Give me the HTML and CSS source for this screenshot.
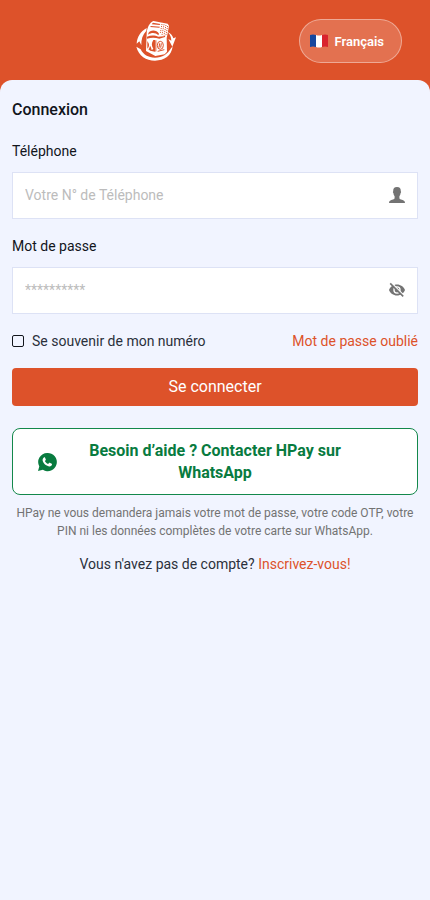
FILE: index.html
```html
<!DOCTYPE html>
<html lang="fr">
<head>
  <meta charset="UTF-8" />
  <meta name="viewport" content="width=device-width, initial-scale=1.0"/>
  <title>HPay - Connexion</title>
  <link rel="stylesheet" href="styles.css">
</head>
<body>
  <header class="header">
    <div class="logo">
      <svg viewBox="48 30 120 120" role="img" aria-label="HPay">
        <!-- arrows around the box -->
        <g fill="#fff">
          <path d="M80 51C61 62 51 78 50 98l8-7 6 12c-1-18 4-32 15-44z"/>
          <path d="M49 107l13 8c8 16 22 25 43 25 22 0 38-10 48-28l5-6c-3 28-25 43-53 43-27 0-49-15-56-42z"/>
          <path d="M143 63c8 8 11 17 11 26l-9-5 12 23 11-28-8 3c-2-8-7-15-17-19z"/>
        </g>
        <!-- box -->
        <path fill="#fff" d="M80 69c0-17 9-35 20-39l43 8 4 6-4 23-3 14 1 41-7 8-28 5-28-15z"/>
        <g fill="#dd522a">
          <path d="M99 35l22 4-2 3-24-2zM93 45l27 2-2 3-28-2z"/>
          <path d="M85 67c5-11 25-11 32 1l-2 5c-8-8-20-9-30-2z"/>
          <path d="M81 77c11-5 25-4 34 0l16-1 5-3-1 5-17 5c-13-4-24-4-37 0z"/>
          <path d="M82 90c7 9 7 16 0 23zM100 87c-6 9-6 17 0 27l-5 3c-1-6-2-9-5-13-1 5-2 8-5 11l6 4 14 3V87z"/>
          <path d="M106 88h3v33l-3 1z"/>
        </g>
        <g fill="none" stroke="#dd522a" stroke-width="3">
          <path d="M126 39l-5 27M132 40l-6 32M138 42l-6 31M143 45l-5 27" stroke-dasharray="3 3"/>
          <ellipse cx="121" cy="103" rx="9" ry="12"/>
          <path d="M119 97l-2 13M124 97l-2 13"/>
          <path d="M113 121l20-5"/>
        </g>
      </svg>
    </div>
    <button type="button" class="lang-btn">
      <svg class="flag" viewBox="0 0 18 14" aria-hidden="true">
        <path fill="#17479e" d="M0 1q3-1 6 0v12q-3-1-6 0z"/>
        <path fill="#fff" d="M6 1q3 1 6 0v12q-3 1-6 0z"/>
        <path fill="#d9232e" d="M12 1q3-1 6 0v12q-3-1-6 0z"/>
      </svg>
      <span>Français</span>
    </button>
  </header>

  <main class="panel">
    <h1>Connexion</h1>
    <form>
      <label class="field-label" for="phone">Téléphone</label>
      <div class="field">
        <input type="tel" id="phone" placeholder="Votre N° de Téléphone">
        <svg class="field-icon" viewBox="0 0 16 16" aria-hidden="true">
          <path fill="#737373" d="M8 0C5.300 0 4 1.500 4.200 4.200c-.5.500-.3 1.500.2 1.900.2 1.500.6 2.500 1.200 3.200v1.700c0 .9-.7 1.300-1.600 1.600C1.500 13.400 0 13.900 0 16h16c0-2.100-1.500-2.600-4-3.400-.9-.3-1.600-.7-1.600-1.600V9.300c.6-.7 1-1.700 1.200-3.200.5-.4.700-1.400.2-1.900C12 1.500 10.700 0 8 0z"/>
        </svg>
      </div>

      <label class="field-label" for="password">Mot de passe</label>
      <div class="field">
        <input type="password" id="password" placeholder="**********">
        <button type="button" class="field-icon" aria-label="Afficher le mot de passe">
          <svg viewBox="0 0 16 16" aria-hidden="true">
            <path fill="#737373" fill-rule="evenodd" d="M8 2.500C4.300 2.500 1.300 4.800 0 8c1.300 3.200 4.300 5.500 8 5.500s6.700-2.300 8-5.500c-1.300-3.200-4.300-5.500-8-5.500zM8 4.300a3.700 3.700 0 1 1 0 7.400 3.700 3.700 0 0 1 0-7.400z"/>
            <circle cx="8" cy="8" r="2.400" fill="#737373"/>
            <path d="M2.200.8l13 13" stroke="#fff" stroke-width="1.500"/>
            <path d="M1.200 1.400l13 13" stroke="#737373" stroke-width="1.600"/>
          </svg>
        </button>
      </div>

      <div class="options">
        <label class="remember"><input type="checkbox"> Se souvenir de mon numéro</label>
        <a href="#">Mot de passe oublié</a>
      </div>

      <button type="submit" class="submit-btn">Se connecter</button>
    </form>

    <a href="#" class="whatsapp">
      <svg viewBox="0 0 20 20" aria-hidden="true">
        <path fill="#087b3f" d="M10.200 1a9 9 0 0 0-7.900 13.400L1 19l4.900-1.200A9.100 9.100 0 1 0 10.200 1z"/>
        <path fill="#fff" d="M6.900 5.500c.3-.3.900-.3 1.100.1l.8 1.900c.1.300 0 .5-.2.800l-.7.800c.7 1.400 1.700 2.300 3.200 3l.9-1.100c.2-.3.500-.3.800-.2l1.900.9c.4.200.4.400.3.800-.3 1.400-1.600 2.100-2.900 1.900-3.200-.6-6.200-3.500-6.500-6.200-.1-1.100.5-2.100 1.300-2.700z"/>
      </svg>
      <span>Besoin d’aide ? Contacter HPay sur WhatsApp</span>
    </a>
    <p class="notice">HPay ne vous demandera jamais votre mot de passe, votre code OTP, votre PIN ni les données complètes de votre carte sur WhatsApp.</p>
    <p class="register">Vous n'avez pas de compte? <a href="#">Inscrivez-vous!</a></p>
  </main>
</body>
</html>
```
FILE: styles.css
```css
* {
  box-sizing: border-box;
}

body {
  margin: 0;
  min-height: 100vh;
  display: flex;
  flex-direction: column;
  background-color: #dd522a;
  color: #2b303b;
  font-family: Roboto, sans-serif;
  font-size: 14px;
  line-height: 20px;
}

input, button {
  font-family: inherit;
}

a {
  color: #dd522a;
  text-decoration: none;
}

.header {
  display: flex;
  align-items: center;
  padding: 19px 28px 17px 12px;
}

.logo {
  flex: 1;
  display: flex;
  justify-content: center;
}

.logo svg {
  width: 40px;
  height: 40px;
}

.lang-btn {
  display: flex;
  align-items: center;
  gap: 6px;
  height: 44px;
  padding: 0 17px 0 10px;
  border: 1px solid rgba(255, 255, 255, 0.4);
  border-radius: 22px;
  background-color: rgba(255, 255, 255, 0.18);
  color: #fff;
  font-size: 13px;
  font-weight: 600;
  cursor: pointer;
}

.flag {
  width: 18px;
  height: 14px;
}

.panel {
  flex: 1;
  padding: 18px 12px;
  border-radius: 12px 12px 0 0;
  background-color: #f1f4ff;
}

h1 {
  margin: 0 0 19px;
  color: #12151c;
  font-size: 16px;
  font-weight: 500;
  line-height: 24px;
}

.field-label {
  display: block;
  margin-bottom: 11px;
  color: #12151c;
}

.field {
  display: flex;
  align-items: center;
  height: 47px;
  margin-bottom: 17px;
  padding: 0 12px 1px;
  border: 1px solid #dde2f5;
  background-color: #fff;
}

.field input {
  flex: 1;
  min-width: 0;
  padding: 0;
  border: none;
  outline: none;
  background: none;
  font-size: 14px;
}

.field input::placeholder {
  color: #bcbcbc;
}

.field-icon {
  width: 16px;
  height: 16px;
  padding: 0;
  border: none;
  background: none;
}

.field-icon svg {
  display: block;
}

.options {
  display: flex;
  justify-content: space-between;
  margin-bottom: 17px;
}

.remember {
  display: flex;
  align-items: center;
  gap: 8px;
}

.remember input {
  appearance: none;
  width: 12px;
  height: 12px;
  margin: 0;
  border: 1px solid #12151c;
  border-radius: 2px;
}

.remember input:checked {
  background-color: #dd522a;
}

.submit-btn {
  display: block;
  width: 100%;
  height: 38px;
  padding: 0 0 2px;
  border: none;
  border-radius: 4px;
  background-color: #dd522a;
  color: #fff;
  font-size: 16px;
  cursor: pointer;
}

.whatsapp {
  display: grid;
  grid-template-columns: 20px 1fr 20px;
  gap: 12px;
  align-items: center;
  margin-top: 22px;
  padding: 11px 24px 10px;
  border: 1px solid #13884b;
  border-radius: 8px;
  background-color: #fff;
  color: #087b3f;
  font-size: 16px;
  font-weight: 700;
  line-height: 22px;
  text-align: center;
}

.notice {
  margin: 9px 0 14px;
  color: #737373;
  font-size: 12px;
  line-height: 18px;
  text-align: center;
}

.register {
  margin: 0;
  text-align: center;
}
```
